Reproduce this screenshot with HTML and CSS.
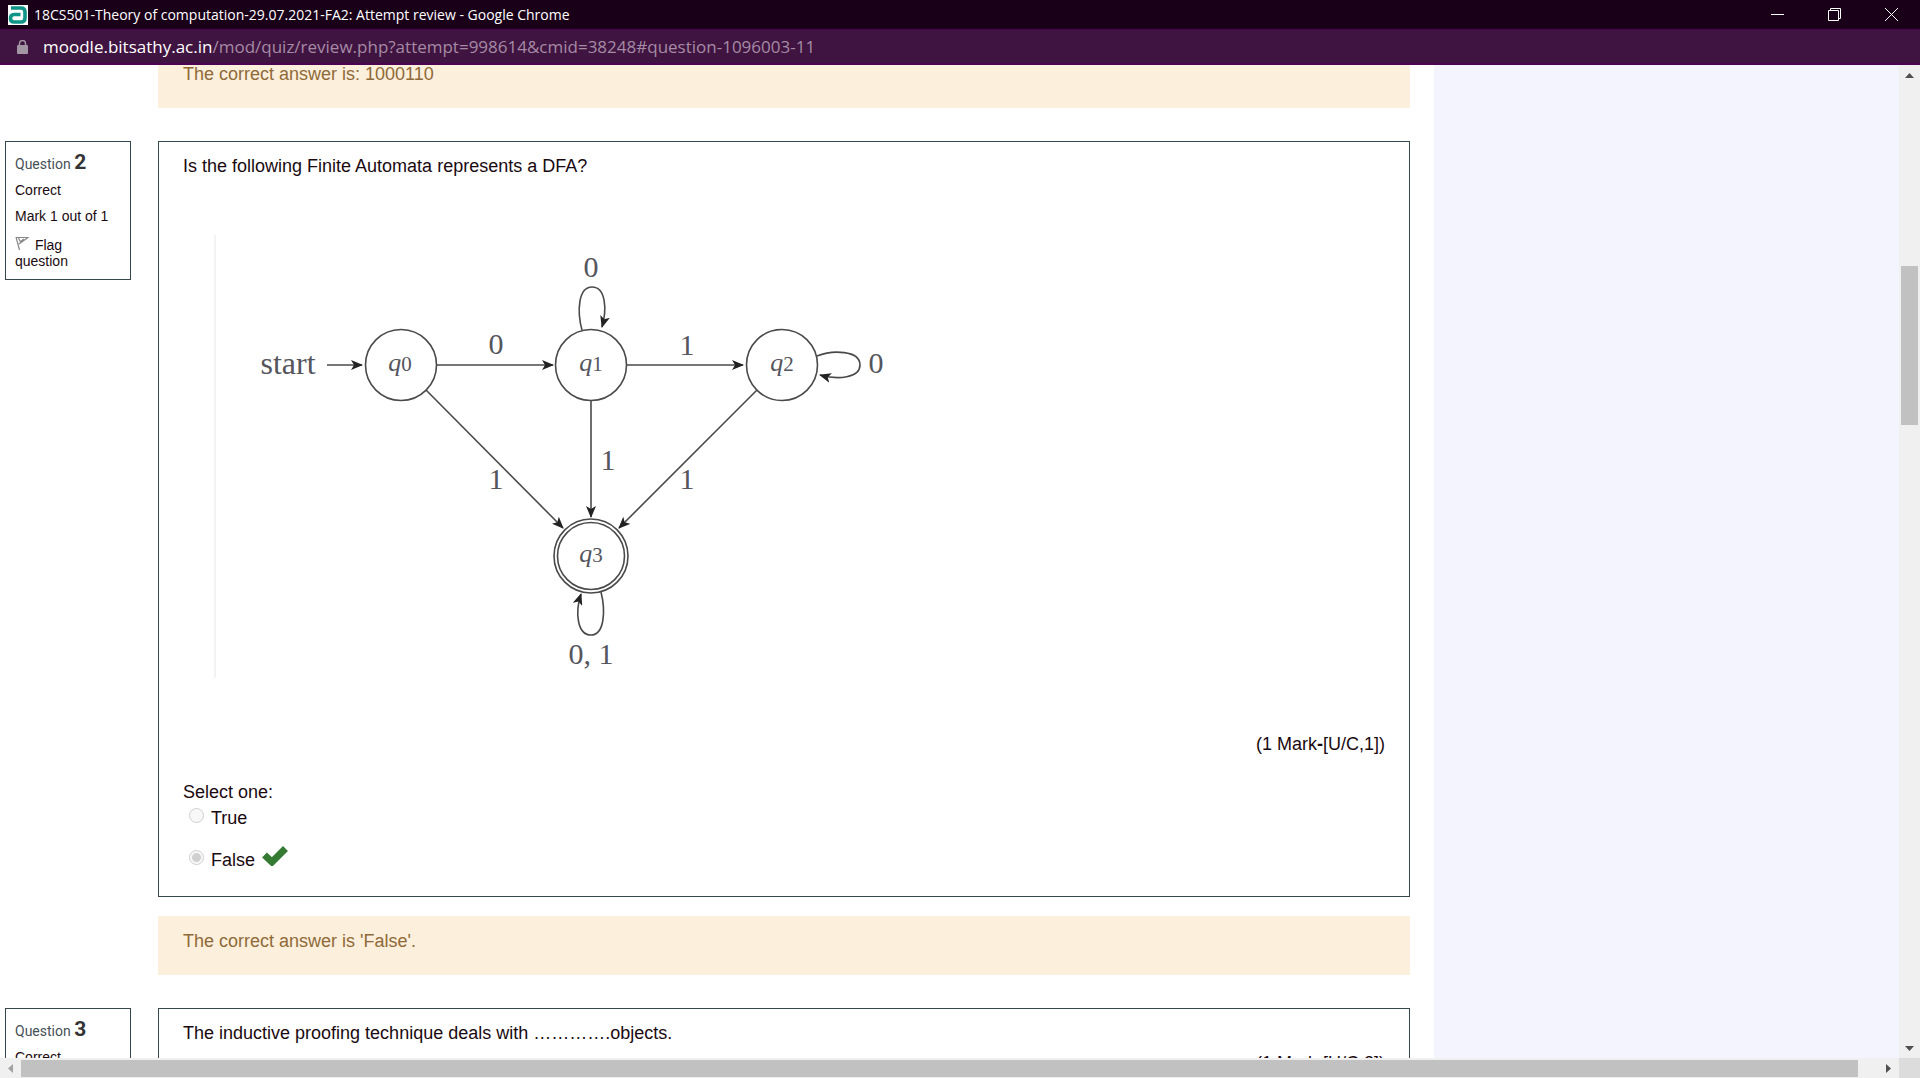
FILE: index.html
```html
<!DOCTYPE html>
<html lang="en">
<head>
<meta charset="utf-8">
<title>18CS501-Theory of computation-29.07.2021-FA2: Attempt review</title>
<link rel="stylesheet" href="styles.css">
</head>
<body>
<header class="titlebar">
  <svg class="favicon" width="20" height="20" viewBox="0 0 20 20" aria-hidden="true">
    <rect width="20" height="20" fill="#fff"/>
    <path d="M3 3H13Q17 3 17 7V13Q17 17 13 17H6Q2.500 17 2.500 13.500Q2.500 9.500 6 9.500H12.500" fill="none" stroke="#0f9488" stroke-width="3.600"/>
    <path d="M6.500 13.300H12.500" stroke="#fff" stroke-width="1.500"/>
  </svg>
  <span class="window-title">18CS501-Theory of computation-29.07.2021-FA2: Attempt review - Google Chrome</span>
  <div class="window-controls">
    <button type="button" aria-label="Minimize"><svg width="13" height="13" viewBox="0 0 13 13"><path d="M0 6.500H13"/></svg></button>
    <button type="button" aria-label="Restore"><svg width="13" height="13" viewBox="0 0 13 13"><path d="M.500 2.500H10.500V12.500H.500ZM2.500 2.500V.500H12.500V10.500H10.500"/></svg></button>
    <button type="button" aria-label="Close"><svg width="13" height="13" viewBox="0 0 13 13"><path d="M0 0L13 13M13 0L0 13"/></svg></button>
  </div>
</header>
<div class="addressbar">
  <svg width="11" height="14" viewBox="0 0 11 14" aria-hidden="true">
    <rect y="5" width="11" height="9" rx="1" fill="#a295a4"/>
    <path d="M2.500 6V3.500a3 3 0 0 1 6 0V6" fill="none" stroke="#a295a4" stroke-width="1.500"/>
  </svg>
  <span class="url"><span class="url-host">moodle.bitsathy.ac.in</span>/mod/quiz/review.php?attempt=998614&amp;cmid=38248#question-1096003-11</span>
</div>
<div class="viewport">
  <div class="page">
    <main class="questions">
      <div class="feedback feedback-first">The correct answer is: 1000110</div>

      <section class="question">
        <aside class="info">
          <h3>Question <b>2</b></h3>
          <p class="state">Correct</p>
          <p class="grade">Mark 1 out of 1</p>
          <a class="flag" href="#"><svg width="14" height="14" viewBox="0 0 14 14" aria-hidden="true"><path d="M1 1L4.500 14M1.300 1.500H13L4 8M3.500 2L5.500 6M5 6L9 3" fill="none" stroke="#888" stroke-width="1.200"/></svg> Flag question</a>
        </aside>
        <div class="content">
          <p class="text">Is the following Finite Automata represents a DFA?</p>
          <svg class="automaton" width="700" height="443" viewBox="214 235 700 443" role="img" aria-label="Finite automaton with states q0 to q3">
            <defs>
              <marker id="arrow" viewBox="0 0 12 10" refX="11" refY="5" markerWidth="12" markerHeight="10" markerUnits="userSpaceOnUse" orient="auto">
                <path d="M0 0L12 5L0 10L3 5Z" fill="#222"/>
              </marker>
            </defs>
            <path d="M215 235V678" stroke="#f3f3f3" stroke-width="2"/>
            <g class="edges">
              <path d="M327 365H362"/>
              <path d="M436 365H553"/>
              <path d="M627 365H743"/>
              <path d="M591 400V517"/>
              <path d="M426 390L563 528"/>
              <path d="M757 390L619 528"/>
              <path d="M582 330C577 312 578 287 592 287C606 287 607 310 602 327"/>
              <path d="M817 356C832 350 860 350 860 365C860 378 838 380 820 375"/>
              <path d="M601 592C606 612 604 635 591 635C577 635 575 612 581 594"/>
            </g>
            <g class="states">
              <circle cx="401" cy="365" r="35.500"/>
              <circle cx="591" cy="365" r="35.500"/>
              <circle cx="782" cy="365" r="35.500"/>
              <circle cx="591" cy="556" r="37"/>
              <circle cx="591" cy="556" r="33.500"/>
            </g>
            <g class="labels">
              <text class="start" x="288" y="374">start</text>
              <text x="591" y="277">0</text>
              <text x="496" y="354">0</text>
              <text x="687" y="355">1</text>
              <text x="876" y="373">0</text>
              <text x="608" y="470">1</text>
              <text x="496" y="489">1</text>
              <text x="687" y="489">1</text>
              <text x="591" y="664">0, 1</text>
              <text x="400" y="371"><tspan class="q">q</tspan><tspan class="sub">0</tspan></text>
              <text x="591" y="371"><tspan class="q">q</tspan><tspan class="sub">1</tspan></text>
              <text x="782" y="371"><tspan class="q">q</tspan><tspan class="sub">2</tspan></text>
              <text x="591" y="562"><tspan class="q">q</tspan><tspan class="sub">3</tspan></text>
            </g>
          </svg>
          <p class="marks">(1 Mark<b>-</b>[U/C,1])</p>
          <fieldset class="answers" disabled>
            <legend>Select one:</legend>
            <div class="answer"><input type="radio" name="q2" id="q2true"><label for="q2true">True</label></div>
            <div class="answer"><input type="radio" name="q2" id="q2false" checked><label for="q2false">False</label>
              <svg class="tick" width="26" height="20" viewBox="0 0 26 20" role="img" aria-label="Correct"><path d="M2.500 9L10 16L23.500 2.500" fill="none" stroke="#357a32" stroke-width="7"/></svg>
            </div>
          </fieldset>
        </div>
      </section>
      <div class="feedback">The correct answer is 'False'.</div>

      <section class="question">
        <aside class="info">
          <h3>Question <b>3</b></h3>
          <p class="state">Correct</p>
        </aside>
        <div class="content">
          <p class="text">The inductive proofing technique deals with ………….objects.</p>
          <p class="marks marks-close">(1 Mark<b>-</b>[U/C,2])</p>
        </div>
      </section>
    </main>
    <aside class="sidebar"></aside>
  </div>
  <div class="scrollbar vertical">
    <button type="button" aria-label="Scroll up"><svg width="9" height="5" viewBox="0 0 9 5"><path d="M0 5L4.500 0L9 5Z"/></svg></button>
    <div class="track"><div class="thumb"></div></div>
    <button type="button" aria-label="Scroll down"><svg width="9" height="5" viewBox="0 0 9 5"><path d="M0 0L4.500 5L9 0Z"/></svg></button>
  </div>
  <div class="scrollbar horizontal">
    <button type="button" class="dim" aria-label="Scroll left"><svg width="5" height="9" viewBox="0 0 5 9"><path d="M5 0L0 4.500L5 9Z"/></svg></button>
    <div class="track"><div class="thumb"></div></div>
    <button type="button" aria-label="Scroll right"><svg width="5" height="9" viewBox="0 0 5 9"><path d="M0 0L5 4.500L0 9Z"/></svg></button>
  </div>
  <div class="corner"></div>
</div>
</body>
</html>
```
FILE: styles.css
```css
* { box-sizing: border-box; }

body {
  margin: 0;
  height: 100vh;
  display: flex;
  flex-direction: column;
  overflow: hidden;
  background: #fff;
  color: #1a0a10;
  font: 18px/20px "Liberation Sans", Arial, sans-serif;
}

p, h3 { margin: 0; }

button {
  display: flex;
  align-items: center;
  justify-content: center;
  padding: 0;
  border: 0;
  background: none;
}

/* Browser window frame */
.titlebar {
  flex: none;
  display: flex;
  align-items: center;
  gap: 6px;
  height: 29px;
  padding-left: 8px;
  background: #190018;
  color: #fff;
}

.window-title { font: 14px/24px "Open Sans", "Noto Sans", sans-serif; }
.window-controls { display: flex; margin-left: auto; }
.window-controls button { width: 57px; height: 28px; }
.window-controls path { fill: none; stroke: #fff; }

.addressbar {
  flex: none;
  display: flex;
  align-items: center;
  gap: 15px;
  height: 36px;
  padding-left: 17px;
  border: solid #4b0550;
  border-width: 1px 0 2px;
  background: #401440;
}

.url { color: #a58ba5; font: 17px/24px "Open Sans", "Noto Sans", sans-serif; }
.url-host { color: #fff; }

/* Scrolled page area */
.viewport {
  flex: 1;
  min-height: 0;
  display: grid;
  grid-template: minmax(0, 1fr) 20px / minmax(0, 1fr) 21px;
}

.page { display: flex; overflow: hidden; }
.questions { flex: 1; min-width: 0; padding: 0 24px 0 5px; }
.sidebar { width: 465px; background: #f4f4ff; }

.question { display: flex; align-items: flex-start; gap: 27px; }

.info {
  flex: none;
  width: 126px;
  min-height: 139px;
  padding: 8px 9px;
  border: 1px solid #37474f;
  font-size: 14px;
  line-height: 16px;
}

.info h3 {
  color: #455056;
  font: 14px/24px Roboto, sans-serif;
}
.info h3 b { color: #333; font-size: 21px; }
.state { margin-top: 6px; }
.grade { margin-top: 10px; }
.flag {
  display: block;
  margin-top: 12px;
  padding-right: 20px;
  color: inherit;
  text-decoration: none;
}
.flag svg { margin-right: 2px; }

.content {
  flex: 1;
  min-width: 0;
  padding: 14px 24px 26px;
  border: 1px solid #37474f;
}

.automaton { display: block; margin: 59px 0 56px 31px; }
.edges path, .states circle { fill: none; stroke: #4a4a4a; stroke-width: 1.6px; }
.edges path { marker-end: url(#arrow); }
.labels { fill: #55555d; font: 30px "Liberation Serif", serif; text-anchor: middle; }
.start { font-size: 32px; }
.q { font-size: 26px; font-style: italic; }
.sub { font-size: 21px; }

.marks { text-align: right; }
.marks-close { margin-top: 10px; }

.answers { margin: 28px 0 0; padding: 0; border: 0; }
.answers legend { padding: 0; }
.answer { display: flex; align-items: flex-start; gap: 7px; margin-top: 22px; padding-left: 6px; }
legend + .answer { margin-top: 6px; }
.answer input {
  appearance: none;
  width: 15px;
  height: 15px;
  margin: 0;
  border: 1px solid #cfcfcf;
  border-radius: 50%;
  background: #f8f8f8;
}
.answer input:checked { background: radial-gradient(circle, #d0d0d0 4px, #f8f8f8 5px); }
.tick { margin-top: -4px; }

.feedback {
  margin: 19px 0 33px 153px;
  padding: 15px 25px 24px;
  background: #fcefdc;
  color: #8f6a38;
}
.feedback-first { margin-top: -16px; }

/* Scroll bars */
.scrollbar { display: flex; background: #f0f0f0; }
.scrollbar path { fill: #505050; }
.scrollbar .dim path { fill: #a3a3a3; }
.track { flex: 1; display: grid; }
.thumb { background: #c1c1c1; }
.vertical { flex-direction: column; padding: 0 2px; }
.vertical button { height: 20px; }
.vertical .track { grid-template-rows: 181fr 159fr 613fr; }
.vertical .thumb { grid-row: 2; }
.horizontal { padding: 2px 0 1px; }
.horizontal button { width: 21px; }
.horizontal .track { grid-template-columns: 1837fr 20fr; }
.corner { background: #dcdcdc; }
```
